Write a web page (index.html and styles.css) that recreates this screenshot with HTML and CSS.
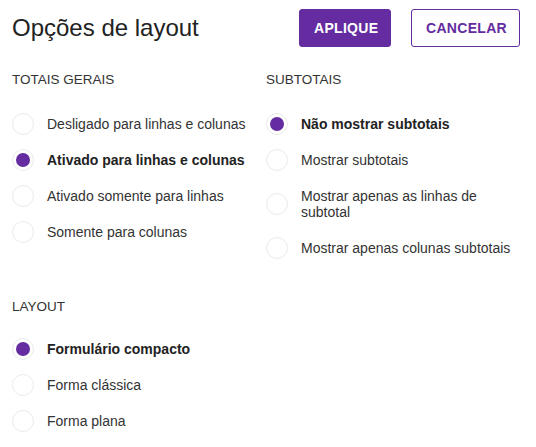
FILE: index.html
```html
<!DOCTYPE html>
<html lang="pt">
<head>
<meta charset="utf-8">
<link rel="stylesheet" href="styles.css">
</head>
<body>
<div class="panel">
  <header class="header">
    <h1 class="title">Opções de layout</h1>
    <div class="actions">
      <button class="btn btn-primary">APLIQUE</button>
      <button class="btn btn-outline">CANCELAR</button>
    </div>
  </header>

  <div class="columns">
    <section class="section">
      <h2 class="heading">TOTAIS GERAIS</h2>
      <ul class="options">
        <li class="option"><span class="radio"></span><span class="label">Desligado para linhas e colunas</span></li>
        <li class="option selected"><span class="radio"></span><span class="label">Ativado para linhas e colunas</span></li>
        <li class="option"><span class="radio"></span><span class="label">Ativado somente para linhas</span></li>
        <li class="option"><span class="radio"></span><span class="label">Somente para colunas</span></li>
      </ul>
    </section>
    <section class="section">
      <h2 class="heading">SUBTOTAIS</h2>
      <ul class="options">
        <li class="option selected"><span class="radio"></span><span class="label">Não mostrar subtotais</span></li>
        <li class="option"><span class="radio"></span><span class="label">Mostrar subtotais</span></li>
        <li class="option"><span class="radio"></span><span class="label">Mostrar apenas as linhas de subtotal</span></li>
        <li class="option"><span class="radio"></span><span class="label">Mostrar apenas colunas subtotais</span></li>
      </ul>
    </section>
  </div>

  <section class="section layout-section">
    <h2 class="heading">LAYOUT</h2>
    <ul class="options">
      <li class="option selected"><span class="radio"></span><span class="label">Formulário compacto</span></li>
      <li class="option"><span class="radio"></span><span class="label">Forma clássica</span></li>
      <li class="option"><span class="radio"></span><span class="label">Forma plana</span></li>
    </ul>
  </section>
</div>
</body>
</html>
```

FILE: styles.css
```css
* { box-sizing: border-box; }
html, body {
  margin: 0;
  padding: 0;
  background: #ffffff;
}
body {
  font-family: "Liberation Sans", Arial, sans-serif;
  color: #333333;
}
.panel {
  padding: 9px 16px 0 12px;
}
.header {
  display: flex;
  align-items: center;
  justify-content: space-between;
  height: 38px;
}
.title {
  margin: 0;
  font-size: 24px;
  font-weight: normal;
  color: #222222;
  line-height: 28px;
}
.actions {
  display: flex;
  gap: 20px;
}
.btn {
  height: 38px;
  padding: 0 14px;
  font-family: "Liberation Sans", Arial, sans-serif;
  font-size: 14px;
  font-weight: bold;
  letter-spacing: 0.3px;
  border-radius: 3px;
  cursor: pointer;
}
.btn-primary {
  background: #642ca0;
  border: 1px solid #642ca0;
  color: #ffffff;
  width: 92px;
}
.btn-outline {
  background: #ffffff;
  border: 1px solid #642ca0;
  color: #642ca0;
  width: 109px;
}
.columns {
  display: grid;
  grid-template-columns: 254px 1fr;
  margin-top: 25px;
}
.heading {
  margin: 0 0 23px 0;
  font-size: 13.5px;
  font-weight: normal;
  line-height: 16px;
  color: #333333;
}
.options {
  list-style: none;
  margin: 0;
  padding: 0;
  display: flex;
  flex-direction: column;
  gap: 10px;
}
.option {
  display: flex;
  align-items: center;
  gap: 13px;
  min-height: 26px;
  font-size: 14px;
  line-height: 16px;
  color: #333333;
}
.label {
  padding: 5px 0;
}
.radio {
  flex: 0 0 22px;
  width: 22px;
  height: 22px;
  border-radius: 50%;
  border: 1px solid #ebebeb;
  background: #ffffff;
  position: relative;
}
.option.selected .radio::after {
  content: "";
  position: absolute;
  left: 3px;
  top: 3px;
  width: 14px;
  height: 14px;
  border-radius: 50%;
  background: #642ca0;
}
.option.selected .label {
  font-weight: bold;
  color: #222222;
}
.layout-section {
  margin-top: 38px;
}
.layout-section .heading {
  margin-bottom: 21px;
}
```
